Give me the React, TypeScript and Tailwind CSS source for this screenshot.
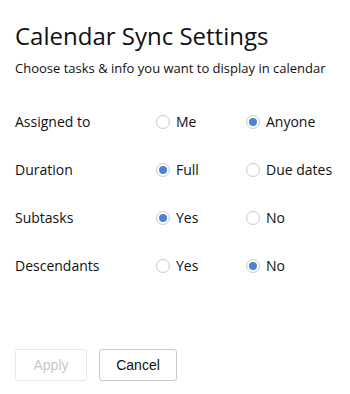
import React, { useState } from "react";

interface Row {
    label: string;
    options: [string, string];
    selected: number;
}

const rows: Row[] = [
    { label: "Assigned to", options: ["Me", "Anyone"], selected: 1 },
    { label: "Duration", options: ["Full", "Due dates"], selected: 0 },
    { label: "Subtasks", options: ["Yes", "No"], selected: 0 },
    { label: "Descendants", options: ["Yes", "No"], selected: 1 },
];

const Radio: React.FC<{ checked: boolean; label: string; onClick: () => void }> = ({
    checked,
    label,
    onClick,
}) => (
    <button onClick={onClick} className="flex items-center gap-[6px] text-left">
        <span className="w-[14px] h-[14px] rounded-full border border-[#c9c9c9] bg-white flex items-center justify-center shrink-0">
            {checked && <span className="w-[8px] h-[8px] rounded-full bg-[#4a86c5]" />}
        </span>
        <span className="text-[14px] leading-5 text-[#111]">{label}</span>
    </button>
);

export default function App() {
    const [values, setValues] = useState(rows.map((r) => r.selected));

    return (
        <div className="w-[350px] h-[394px] bg-white pl-[15px] pt-5 font-['Open_Sans',sans-serif] text-[#111]">
            <h1 className="text-[24px] leading-8 font-normal">Calendar Sync Settings</h1>
            <p className="text-[13px] leading-[18px] mt-[7px]">
                Choose tasks &amp; info you want to display in calendar
            </p>
            <div className="mt-[21px] flex flex-col">
                {rows.map((row, i) => (
                    <div key={row.label} className="h-12 grid grid-cols-[141px_90px_1fr] items-center">
                        <span className="text-[14px] leading-5">{row.label}</span>
                        {row.options.map((opt, j) => (
                            <Radio
                                key={opt}
                                label={opt}
                                checked={values[i] === j}
                                onClick={() =>
                                    setValues((v) => v.map((x, k) => (k === i ? j : x)))
                                }
                            />
                        ))}
                    </div>
                ))}
            </div>
            <div className="mt-[59px] flex gap-3 font-['Liberation_Sans',Arial,sans-serif] text-[14px]">
                <button
                    disabled
                    className="w-[72px] h-[32px] rounded-[3px] border border-[#e6e6e6] text-[#c8c8c8] bg-white"
                >
                    Apply
                </button>
                <button className="w-[78px] h-[32px] rounded-[3px] border border-[#c8c8c8] text-[#111] bg-white">
                    Cancel
                </button>
            </div>
        </div>
    );
}
